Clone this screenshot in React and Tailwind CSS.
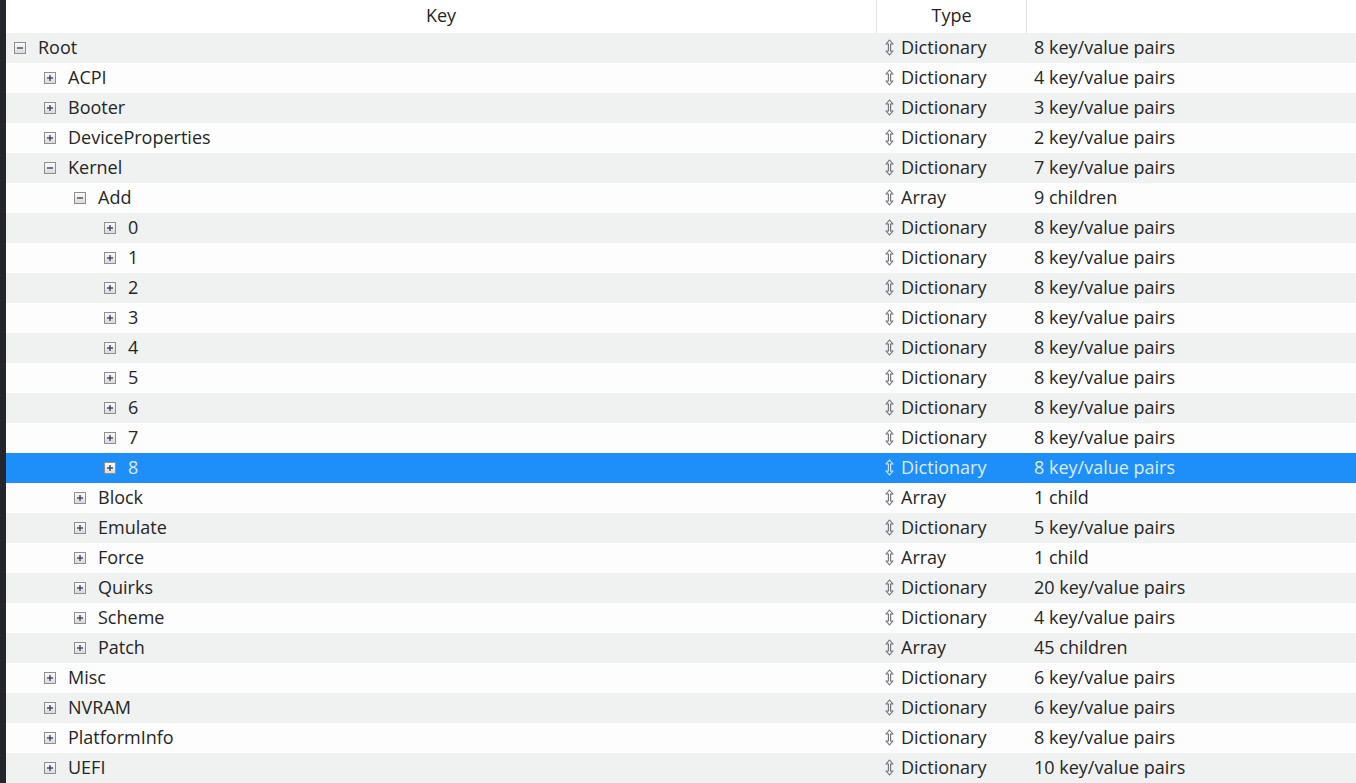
import React from 'react';

const rows = [
    { key: 'Root', level: 0, open: true, type: 'Dictionary', value: '8 key/value pairs' },
    { key: 'ACPI', level: 1, type: 'Dictionary', value: '4 key/value pairs' },
    { key: 'Booter', level: 1, type: 'Dictionary', value: '3 key/value pairs' },
    { key: 'DeviceProperties', level: 1, type: 'Dictionary', value: '2 key/value pairs' },
    { key: 'Kernel', level: 1, open: true, type: 'Dictionary', value: '7 key/value pairs' },
    { key: 'Add', level: 2, open: true, type: 'Array', value: '9 children' },
    { key: '0', level: 3, type: 'Dictionary', value: '8 key/value pairs' },
    { key: '1', level: 3, type: 'Dictionary', value: '8 key/value pairs' },
    { key: '2', level: 3, type: 'Dictionary', value: '8 key/value pairs' },
    { key: '3', level: 3, type: 'Dictionary', value: '8 key/value pairs' },
    { key: '4', level: 3, type: 'Dictionary', value: '8 key/value pairs' },
    { key: '5', level: 3, type: 'Dictionary', value: '8 key/value pairs' },
    { key: '6', level: 3, type: 'Dictionary', value: '8 key/value pairs' },
    { key: '7', level: 3, type: 'Dictionary', value: '8 key/value pairs' },
    { key: '8', level: 3, type: 'Dictionary', value: '8 key/value pairs', selected: true },
    { key: 'Block', level: 2, type: 'Array', value: '1 child' },
    { key: 'Emulate', level: 2, type: 'Dictionary', value: '5 key/value pairs' },
    { key: 'Force', level: 2, type: 'Array', value: '1 child' },
    { key: 'Quirks', level: 2, type: 'Dictionary', value: '20 key/value pairs' },
    { key: 'Scheme', level: 2, type: 'Dictionary', value: '4 key/value pairs' },
    { key: 'Patch', level: 2, type: 'Array', value: '45 children' },
    { key: 'Misc', level: 1, type: 'Dictionary', value: '6 key/value pairs' },
    { key: 'NVRAM', level: 1, type: 'Dictionary', value: '6 key/value pairs' },
    { key: 'PlatformInfo', level: 1, type: 'Dictionary', value: '8 key/value pairs' },
    { key: 'UEFI', level: 1, type: 'Dictionary', value: '10 key/value pairs' },
];

// indent per tree level, in px
const indent = ['pl-[8px]', 'pl-[38px]', 'pl-[68px]', 'pl-[98px]'];

const Expander = ({ open }) => (
    <svg width="12" height="12" viewBox="0 0 12 12" className="shrink-0">
        <defs>
            <linearGradient id="exp" x1="0" y1="0" x2="0" y2="1">
                <stop offset="0" stopColor="#fdfdfd" />
                <stop offset="1" stopColor="#d8d8d8" />
            </linearGradient>
        </defs>
        <rect x="0.5" y="0.5" width="11" height="11" fill="url(#exp)" stroke="#8f8f8f" />
        <path d="M3 6h6" stroke="#2e3d5e" strokeWidth="1.3" />
        {!open && <path d="M6 3v6" stroke="#2e3d5e" strokeWidth="1.3" />}
    </svg>
);

const UpDown = ({ selected }) => (
    <svg width="9" height="17" viewBox="0 0 9 17" className="shrink-0">
        <path
            d="M4.5 1 L8 5 L5.6 5 L5.6 12 L8 12 L4.5 16 L1 12 L3.4 12 L3.4 5 L1 5 Z"
            fill="none"
            stroke={selected ? '#d6e9ff' : '#6f6f78'}
            strokeWidth="1.1"
            strokeLinejoin="round"
        />
    </svg>
);

const Row = ({ row, index }) => {
    const bg = row.selected ? 'bg-[#1e8ff8]' : index % 2 === 0 ? 'bg-[#f0f1f1]' : 'bg-[#fdfdfd]';
    const text = row.selected ? 'text-[#dcecff]' : 'text-[#262626]';
    return (
        <div className={`grid grid-cols-[871px_150px_1fr] h-[30px] items-center pb-[1px] ${bg} ${text}`}>
            <div className={`flex items-center gap-[12px] ${indent[row.level]}`}>
                <Expander open={row.open} />
                <span>{row.key}</span>
            </div>
            <div className="flex items-center gap-[7px] pl-[8px]">
                <UpDown selected={row.selected} />
                <span>{row.type}</span>
            </div>
            <div className="pl-[7px]">{row.value}</div>
        </div>
    );
};

export default function App() {
    return (
        <div className="flex w-[1356px] h-[783px] overflow-hidden bg-white font-['Open_Sans',sans-serif] text-[18px]">
            {/* window edge */}
            <div className="w-[6px] shrink-0 bg-[#23262c]"></div>

            <div className="flex-1 flex flex-col">
                {/* column headers */}
                <div className="grid grid-cols-[871px_150px_1fr] h-[33px] bg-white text-[#262626]">
                    <div className="flex items-center justify-center pb-[3px] border-r border-[#e3e3e3]">Key</div>
                    <div className="flex items-center justify-center pb-[3px] border-r border-[#e3e3e3]">Type</div>
                    <div></div>
                </div>

                {rows.map((row, i) => (
                    <Row key={i} row={row} index={i} />
                ))}
            </div>
        </div>
    );
}
